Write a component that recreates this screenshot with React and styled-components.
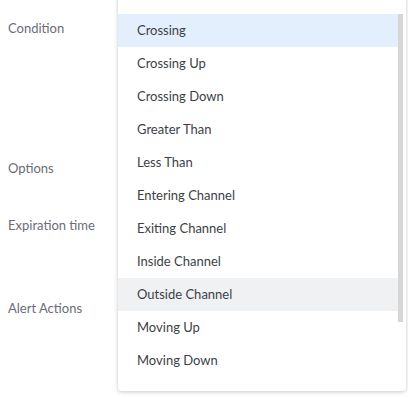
import React from "react";
import styled, { createGlobalStyle } from "styled-components";

const Global = createGlobalStyle`
  html, body { margin: 0; padding: 0; background: #ffffff; }
  body { font-family: "Trebuchet MS", Lato, "Noto Sans", sans-serif; }
`;

const Page = styled.div`
  position: relative;
  width: 408px;
  height: 398px;
  overflow: hidden;
  background: #fff;
`;

const Labels = styled.div`
  display: flex;
  flex-direction: column;
  padding: 19px 0 0 8px;
`;

const Label = styled.div`
  height: ${(p) => p.$h}px;
  font-size: 13px;
  line-height: 18px;
  color: #6a6d78;
`;

const Menu = styled.div`
  position: absolute;
  left: 118px;
  top: -8px;
  width: 288px;
  height: 399px;
  box-sizing: border-box;
  background: #fff;
  border-radius: 4px;
  box-shadow: 0 1px 4px rgba(0, 0, 0, 0.22);
  padding-top: 22px;
  display: flex;
`;

const List = styled.div`
  width: 280px;
  display: flex;
  flex-direction: column;
`;

const Item = styled.div`
  height: 33px;
  display: flex;
  align-items: center;
  padding-left: 19px;
  padding-bottom: 1px;
  box-sizing: border-box;
  font-size: 13px;
  color: #3d3f47;
  background: ${(p) => (p.$selected ? "#e3effd" : p.$hover ? "#f0f1f3" : "transparent")};
`;

const Track = styled.div`
  width: 8px;
  display: flex;
  justify-content: flex-start;
`;

const Thumb = styled.div`
  width: 5px;
  height: 308px;
  background: #d6d6d6;
`;

const items = [
  "Crossing",
  "Crossing Up",
  "Crossing Down",
  "Greater Than",
  "Less Than",
  "Entering Channel",
  "Exiting Channel",
  "Inside Channel",
  "Outside Channel",
  "Moving Up",
  "Moving Down",
];

export default function App() {
  return (
    <Page>
      <Global />
      <Labels>
        <Label $h={140}>Condition</Label>
        <Label $h={57}>Options</Label>
        <Label $h={83}>Expiration time</Label>
        <Label $h={18}>Alert Actions</Label>
      </Labels>
      <Menu>
        <List>
          {items.map((t, i) => (
            <Item key={t} $selected={i === 0} $hover={i === 8}>
              {t}
            </Item>
          ))}
        </List>
        <Track>
          <Thumb />
        </Track>
      </Menu>
    </Page>
  );
}
